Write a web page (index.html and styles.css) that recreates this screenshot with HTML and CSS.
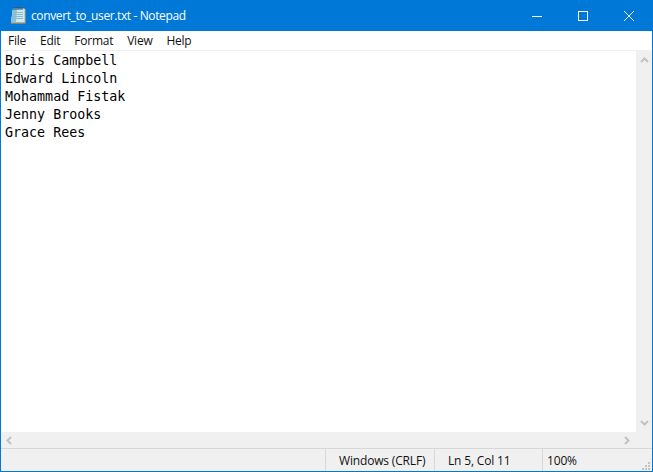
FILE: index.html
```html
<!DOCTYPE html>
<html lang="en">
<head>
<meta charset="utf-8">
<title>convert_to_user.txt - Notepad</title>
<link rel="stylesheet" href="styles.css">
</head>
<body>
<div class="window">
  <header class="titlebar">
    <svg class="app-icon" width="16" height="17" viewBox="0 0 16 17">
      <path d="M3 2h12.500v14.500H1z" fill="#c8a874"/>
      <path d="M3 1.500h11.500v13.500H1z" fill="#cdeaf6"/>
      <path d="M3 1.500L1 15h5L7 1.500z" fill="#8cc3dc"/>
      <path d="M3.500 5.500h9.500M3.200 7.500h9.800M3 9.500h10M2.700 11.500h10.300" stroke="#8db7cc" stroke-width="1"/>
      <path d="M4 0v3M6 0v3M8 0v3M10 0v3M12 0v3" stroke="#3c4a55" stroke-width="1"/>
    </svg>
    <span class="title">convert_to_user.txt - Notepad</span>
    <div class="controls">
      <span class="control">
        <svg width="10" height="10" viewBox="0 0 10 10"><path d="M0 5.500h10" stroke="#fff" fill="none"/></svg>
      </span>
      <span class="control">
        <svg width="10" height="10" viewBox="0 0 10 10"><rect x=".5" y=".5" width="9" height="9" stroke="#fff" fill="none"/></svg>
      </span>
      <span class="control">
        <svg width="10" height="10" viewBox="0 0 10 10"><path d="M0 0l10 10M10 0L0 10" stroke="#fff" fill="none"/></svg>
      </span>
    </div>
  </header>
  <nav class="menubar">
    <span class="menu-item">File</span>
    <span class="menu-item">Edit</span>
    <span class="menu-item">Format</span>
    <span class="menu-item">View</span>
    <span class="menu-item">Help</span>
  </nav>
  <main class="client">
    <div class="editor-row">
      <pre class="editor">Boris Campbell
Edward Lincoln
Mohammad Fistak
Jenny Brooks
Grace Rees</pre>
      <div class="vscroll">
        <svg width="9" height="6" viewBox="0 0 9 6"><path d="M1 5l3.500-3.500L8 5" stroke="#c2c2c2" stroke-width="2" fill="none"/></svg>
        <svg width="9" height="6" viewBox="0 0 9 6"><path d="M1 1l3.500 3.500L8 1" stroke="#c2c2c2" stroke-width="2" fill="none"/></svg>
      </div>
    </div>
    <div class="hscroll">
      <svg width="6" height="9" viewBox="0 0 6 9"><path d="M5 1L1.500 4.500 5 8" stroke="#c2c2c2" stroke-width="2" fill="none"/></svg>
      <svg width="6" height="9" viewBox="0 0 6 9"><path d="M1 1l3.500 3.500L1 8" stroke="#c2c2c2" stroke-width="2" fill="none"/></svg>
    </div>
  </main>
  <footer class="statusbar">
    <span class="cell cell-eol">Windows (CRLF)</span>
    <span class="cell cell-pos">Ln 5, Col 11</span>
    <span class="cell cell-zoom">100%</span>
    <svg class="grip" width="10" height="10" viewBox="0 0 10 10"><path d="M7 1h2v2H7zM4 4h2v2H4zM7 4h2v2H7zM1 7h2v2H1zM4 7h2v2H4zM7 7h2v2H7z" fill="#c4c4c4"/></svg>
  </footer>
</div>
</body>
</html>
```
FILE: styles.css
```css
* { box-sizing: border-box; }
html, body { margin: 0; height: 100%; }
body { overflow: hidden; font-family: "Open Sans", "Noto Sans", sans-serif; }
.window {
  width: 653px;
  height: 472px;
  border: 1px solid #0078d7;
  border-top: 0;
  display: flex;
  flex-direction: column;
  background: #fff;
}
.titlebar {
  height: 31px;
  flex: none;
  background: #0078d7;
  display: flex;
  align-items: center;
  padding-left: 9px;
  color: #fff;
}
.app-icon { flex: none; margin-right: 5px; }
.title { font-size: 12px; flex: 1; white-space: nowrap; letter-spacing: -.38px; }
.controls { display: flex; }
.control {
  width: 46px;
  height: 30px;
  display: flex;
  align-items: center;
  justify-content: center;
}
.menubar {
  height: 19px;
  flex: none;
  display: flex;
  align-items: center;
  background: #fff;
  font-size: 12px;
  color: #111;
}
.menu-item { padding: 0 7px; letter-spacing: -.25px; }
.client {
  flex: 1;
  min-height: 0;
  display: flex;
  flex-direction: column;
  border-top: 1px solid #f0f0f0;
}
.editor-row { flex: 1; min-height: 0; display: flex; }
.editor {
  flex: 1;
  margin: 0;
  padding: 1px 4px 0;
  font-family: "DejaVu Sans Mono", "Liberation Mono", monospace;
  font-size: 13.33px;
  line-height: 18px;
  color: #000;
}
.vscroll {
  width: 16px;
  flex: none;
  background: #f0f0f0;
  display: flex;
  flex-direction: column;
  align-items: center;
  justify-content: space-between;
  padding: 6px 0;
}
.hscroll {
  height: 16px;
  flex: none;
  background: #f0f0f0;
  display: flex;
  align-items: center;
  justify-content: space-between;
  padding: 0 22px 0 5px;
}
.statusbar {
  height: 23px;
  flex: none;
  background: #f0f0f0;
  border-top: 1px solid #d7d7d7;
  display: flex;
  align-items: center;
  justify-content: flex-end;
  position: relative;
  font-size: 12px;
  color: #111;
}
.cell {
  height: 22px;
  display: flex;
  align-items: center;
  border-left: 1px solid #d7d7d7;
  white-space: nowrap;
  letter-spacing: -.17px;
}
.cell-eol { width: 109px; padding-left: 13px; }
.cell-pos { width: 108px; padding-left: 13px; }
.cell-zoom { width: 110px; padding-left: 4px; }
.grip { position: absolute; right: 1px; bottom: 0; }
```
